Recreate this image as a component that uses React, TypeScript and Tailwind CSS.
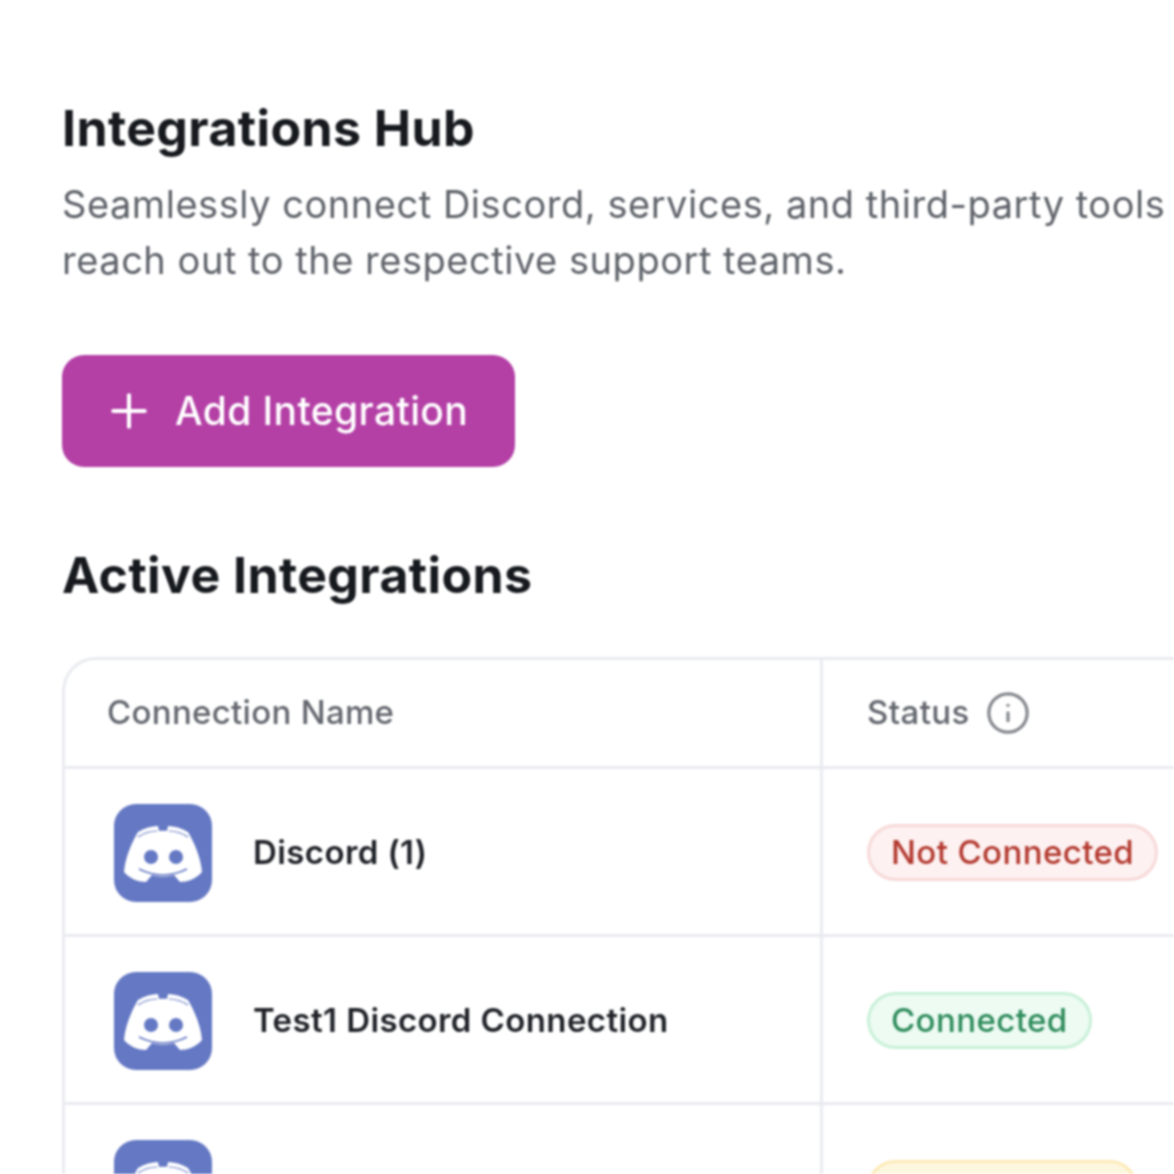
import { Info, Plus } from "lucide-react";

const rows = [
  {
    name: "Discord (1)",
    status: "Not Connected",
    badge: "bg-[#fdf1f1] border-[#f8d9d9] text-[#b3392f]",
  },
  {
    name: "Test1 Discord Connection",
    status: "Connected",
    badge: "bg-[#edfbf3] border-[#c9f0d8] text-[#2e8b5b]",
  },
  {
    name: "Test2 Discord Connection",
    status: "Disconnected",
    badge: "bg-[#fef7e0] border-[#fdeab8] text-[#b5762a]",
  },
];

const DiscordLogo = () => (
  <svg viewBox="0 0 98 98" className="h-[98px] w-[98px] shrink-0 rounded-[22px] bg-[#6478c4]">
    <path
      fill="#fff"
      d="M24 28C30 24 38 22 44 22L45 27C47 26.5 51 26.5 53 27L54 22C60 22 68 24 74 28C80 38 87 54 88 68C82 75 73 78 66 78L60 71C52 73 46 73 38 71L32 78C25 78 16 75 10 68C11 54 18 38 24 28Z"
    />
    <circle cx="37" cy="53" r="7" fill="#6478c4" />
    <circle cx="62" cy="53" r="7" fill="#6478c4" />
    <path d="M25 65Q49 77 73 65" fill="none" stroke="#6478c4" strokeWidth="1.6" />
    <path d="M24 33Q33 27 43 27M74 33Q65 27 55 27" fill="none" stroke="#6478c4" strokeWidth="1.2" />
  </svg>
);

export default function App() {
  return (
    <div className="h-[1174px] w-[1174px] overflow-hidden bg-white font-['Inter',sans-serif] [font-optical-sizing:none] blur-[1px]">
      <div className="pl-[62px] pt-[98px]">
        <h1 className="text-[50px] font-bold leading-[60px] tracking-[0.4px] text-[#16191e]">
          Integrations Hub
        </h1>
        <p className="mt-[18px] whitespace-nowrap text-[38px] leading-[56px] tracking-[0.53px] text-[#5e6269]">
          Seamlessly connect Discord, services, and third-party tools
          <br />
          reach out to the respective support teams.
        </p>
        <button className="mt-[67px] flex h-[112px] w-[453px] items-center gap-[19px] rounded-[22px] bg-[#b440a6] pl-[40px] text-[39px] font-medium tracking-[0.4px] text-white">
          <Plus size={54} strokeWidth={1.8} />
          Add Integration
        </button>
        <h2 className="mt-[78px] text-[50px] font-bold leading-[60px] tracking-[0.4px] text-[#16191e]">
          Active Integrations
        </h2>
        <div className="mt-[52px] w-[1400px] rounded-tl-[34px] border-l-[3px] border-t-[3px] border-[#e9ebf0]">
          <div className="flex h-[109px] border-b-[3px] border-[#e9ebf0]">
            <div className="flex w-[758px] items-center border-r-[3px] border-[#e9ebf0] pl-[42px] text-[33px] font-medium tracking-[0.3px] text-[#63676e]">
              Connection Name
            </div>
            <div className="flex items-center gap-[15px] pl-[44px] text-[33px] font-medium tracking-[0.4px] text-[#63676e]">
              Status
              <Info size={46} strokeWidth={1.7} className="text-[#85888e]" />
            </div>
          </div>
          {rows.map((row) => (
            <div key={row.name} className="flex h-[168px] border-b-[3px] border-[#e9ebf0]">
              <div className="flex w-[758px] items-center border-r-[3px] border-[#e9ebf0] pl-[49px] pt-[2px]">
                <DiscordLogo />
                <span className="ml-[41px] text-[33px] font-semibold tracking-[0.4px] text-[#1f2228]">
                  {row.name}
                </span>
              </div>
              <div className="flex items-center pl-[44px] pt-[2px]">
                <span
                  className={`flex h-[57px] items-center rounded-full border-[3px] px-[21px] text-[33px] font-medium tracking-[0.4px] ${row.badge}`}
                >
                  {row.status}
                </span>
              </div>
            </div>
          ))}
        </div>
      </div>
    </div>
  );
}
